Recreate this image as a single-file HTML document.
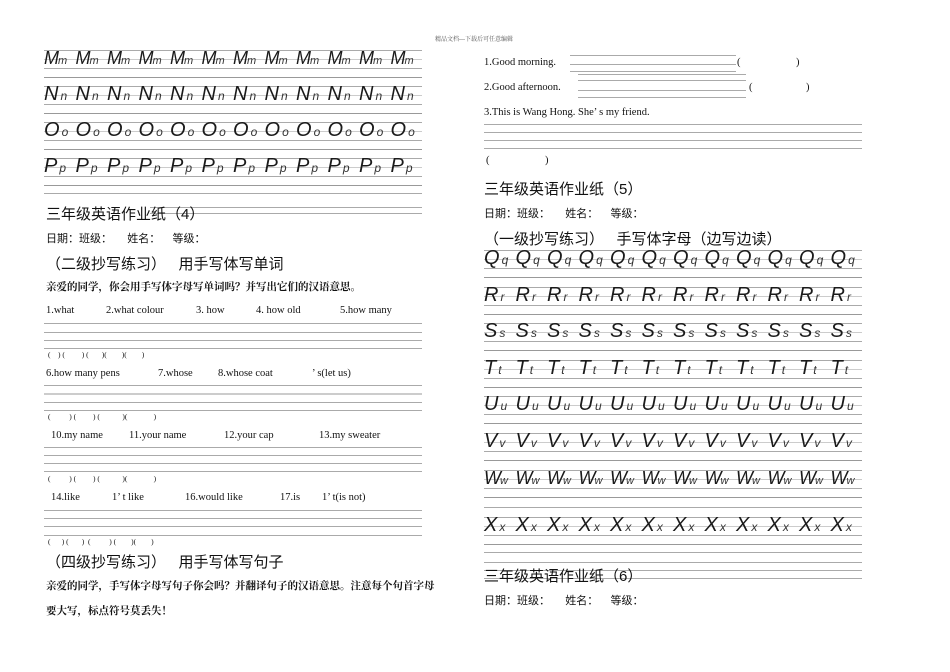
<!DOCTYPE html>
<html><head><meta charset="utf-8">
<style>
body{margin:0;width:950px;height:672px;background:#fff;position:relative;overflow:hidden;font-family:"Liberation Serif","Noto Serif CJK SC",serif;color:#111}
.a{position:absolute;white-space:nowrap}
.lr{position:absolute;width:378px;height:28px;
background:linear-gradient(#aaa,#aaa) 0 0/100% 1px no-repeat,linear-gradient(#ccc,#ccc) 0 9px/100% 1px no-repeat,linear-gradient(#aaa,#aaa) 0 18px/100% 1px no-repeat,linear-gradient(#999,#999) 0 27px/100% 1px no-repeat;
display:flex}
.lr span{width:31.5px;font-family:"Liberation Sans",sans-serif;font-style:italic;font-weight:normal;font-size:20px;line-height:21px;margin-top:-2px;color:#1a1a1a;overflow:visible}
.lr span i{font-size:12px;margin-left:2px;color:#333}
.w span{font-size:18px;letter-spacing:-1px}
.w span i{margin-left:0;font-size:11px}
.h{font-family:"Liberation Sans","Noto Sans CJK SC",sans-serif;font-size:15px}
.s{font-family:"Liberation Sans","Noto Sans CJK SC",sans-serif;font-size:11px}
.b{font-family:"Liberation Serif","Noto Serif CJK SC",serif;font-size:10.5px;font-weight:bold}
.m{font-family:"Liberation Serif","Noto Serif CJK SC",serif;font-size:10.5px}
.p{font-family:"Liberation Serif",serif;font-size:7.5px}
.ln{position:absolute;height:1px;background:#aaa}
</style></head><body>
<div class="a" style="left:435px;top:34px;font-size:6px;color:#555">精品文档---下载后可任意编辑</div>

<div class="lr w" style="left:44px;top:50px"><span>M<i>m</i></span><span>M<i>m</i></span><span>M<i>m</i></span><span>M<i>m</i></span><span>M<i>m</i></span><span>M<i>m</i></span><span>M<i>m</i></span><span>M<i>m</i></span><span>M<i>m</i></span><span>M<i>m</i></span><span>M<i>m</i></span><span>M<i>m</i></span></div>
<div class="lr" style="left:44px;top:86px"><span>N<i>n</i></span><span>N<i>n</i></span><span>N<i>n</i></span><span>N<i>n</i></span><span>N<i>n</i></span><span>N<i>n</i></span><span>N<i>n</i></span><span>N<i>n</i></span><span>N<i>n</i></span><span>N<i>n</i></span><span>N<i>n</i></span><span>N<i>n</i></span></div>
<div class="lr" style="left:44px;top:122px"><span>O<i>o</i></span><span>O<i>o</i></span><span>O<i>o</i></span><span>O<i>o</i></span><span>O<i>o</i></span><span>O<i>o</i></span><span>O<i>o</i></span><span>O<i>o</i></span><span>O<i>o</i></span><span>O<i>o</i></span><span>O<i>o</i></span><span>O<i>o</i></span></div>
<div class="lr" style="left:44px;top:158px"><span>P<i>p</i></span><span>P<i>p</i></span><span>P<i>p</i></span><span>P<i>p</i></span><span>P<i>p</i></span><span>P<i>p</i></span><span>P<i>p</i></span><span>P<i>p</i></span><span>P<i>p</i></span><span>P<i>p</i></span><span>P<i>p</i></span><span>P<i>p</i></span></div>
<div class="ln" style="left:44px;top:193px;width:378px"></div>

<div class="ln" style="left:150px;top:207px;width:272px"></div>
<div class="ln" style="left:150px;top:213px;width:272px"></div>
<div class="a h" style="left:46px;top:203px">三年级英语作业纸（4）</div>
<div class="a s" style="left:46px;top:230px">日期：班级：&nbsp;&nbsp;&nbsp;&nbsp;&nbsp;姓名：&nbsp;&nbsp;&nbsp;&nbsp;等级：</div>
<div class="a h" style="left:46px;top:253px">（二级抄写练习）&nbsp;&nbsp;&nbsp;用手写体写单词</div>
<div class="a b" style="left:46px;top:279px">亲爱的同学，你会用手写体字母写单词吗？并写出它们的汉语意思。</div>

<div class="a m" style="left:46px;top:305px">1.what</div><div class="a m" style="left:106px;top:305px">2.what colour</div><div class="a m" style="left:196px;top:305px">3. how</div><div class="a m" style="left:256px;top:305px">4. how old</div><div class="a m" style="left:340px;top:305px">5.how many</div>
<div class="ln" style="left:44px;top:323px;width:378px"></div><div class="ln" style="left:44px;top:332px;width:378px"></div><div class="ln" style="left:44px;top:340px;width:378px"></div><div class="ln" style="left:44px;top:348px;width:378px"></div>
<div class="a p" style="left:48px;top:350px">(&nbsp;&nbsp;&nbsp;&nbsp;)&nbsp;(&nbsp;&nbsp;&nbsp;&nbsp;&nbsp;&nbsp;&nbsp;&nbsp;&nbsp;)&nbsp;(&nbsp;&nbsp;&nbsp;&nbsp;&nbsp;&nbsp;&nbsp;)(&nbsp;&nbsp;&nbsp;&nbsp;&nbsp;&nbsp;&nbsp;&nbsp;)(&nbsp;&nbsp;&nbsp;&nbsp;&nbsp;&nbsp;&nbsp;&nbsp;)</div>

<div class="a m" style="left:46px;top:368px">6.how many pens</div><div class="a m" style="left:158px;top:368px">7.whose</div><div class="a m" style="left:218px;top:368px">8.whose coat</div><div class="a m" style="left:312px;top:368px">’ s(let us)</div>
<div class="ln" style="left:44px;top:385px;width:378px"></div><div class="ln" style="left:44px;top:393px;width:378px;background:#ccc;height:2px"></div><div class="ln" style="left:44px;top:402px;width:378px"></div><div class="ln" style="left:44px;top:410px;width:378px"></div>
<div class="a p" style="left:48px;top:412px">(&nbsp;&nbsp;&nbsp;&nbsp;&nbsp;&nbsp;&nbsp;&nbsp;&nbsp;&nbsp;)&nbsp;(&nbsp;&nbsp;&nbsp;&nbsp;&nbsp;&nbsp;&nbsp;&nbsp;&nbsp;)&nbsp;(&nbsp;&nbsp;&nbsp;&nbsp;&nbsp;&nbsp;&nbsp;&nbsp;&nbsp;&nbsp;&nbsp;&nbsp;)(&nbsp;&nbsp;&nbsp;&nbsp;&nbsp;&nbsp;&nbsp;&nbsp;&nbsp;&nbsp;&nbsp;&nbsp;&nbsp;&nbsp;)</div>

<div class="a m" style="left:51px;top:430px">10.my name</div><div class="a m" style="left:129px;top:430px">11.your name</div><div class="a m" style="left:224px;top:430px">12.your cap</div><div class="a m" style="left:319px;top:430px">13.my sweater</div>
<div class="ln" style="left:44px;top:447px;width:378px"></div><div class="ln" style="left:44px;top:455px;width:378px"></div><div class="ln" style="left:44px;top:463px;width:378px"></div><div class="ln" style="left:44px;top:471px;width:378px"></div>
<div class="a p" style="left:48px;top:474px">(&nbsp;&nbsp;&nbsp;&nbsp;&nbsp;&nbsp;&nbsp;&nbsp;&nbsp;&nbsp;)&nbsp;(&nbsp;&nbsp;&nbsp;&nbsp;&nbsp;&nbsp;&nbsp;&nbsp;&nbsp;)&nbsp;(&nbsp;&nbsp;&nbsp;&nbsp;&nbsp;&nbsp;&nbsp;&nbsp;&nbsp;&nbsp;&nbsp;&nbsp;)(&nbsp;&nbsp;&nbsp;&nbsp;&nbsp;&nbsp;&nbsp;&nbsp;&nbsp;&nbsp;&nbsp;&nbsp;&nbsp;&nbsp;)</div>

<div class="a m" style="left:51px;top:492px">14.like</div><div class="a m" style="left:112px;top:492px">1’ t like</div><div class="a m" style="left:185px;top:492px">16.would like</div><div class="a m" style="left:280px;top:492px">17.is</div><div class="a m" style="left:322px;top:492px">1’ t(is not)</div>
<div class="ln" style="left:44px;top:510px;width:378px"></div><div class="ln" style="left:44px;top:518px;width:378px"></div><div class="ln" style="left:44px;top:526px;width:378px"></div><div class="ln" style="left:44px;top:535px;width:378px"></div>
<div class="a p" style="left:48px;top:537px">(&nbsp;&nbsp;&nbsp;&nbsp;&nbsp;&nbsp;)&nbsp;(&nbsp;&nbsp;&nbsp;&nbsp;&nbsp;&nbsp;&nbsp;)&nbsp;&nbsp;(&nbsp;&nbsp;&nbsp;&nbsp;&nbsp;&nbsp;&nbsp;&nbsp;&nbsp;&nbsp;)&nbsp;(&nbsp;&nbsp;&nbsp;&nbsp;&nbsp;&nbsp;&nbsp;&nbsp;)(&nbsp;&nbsp;&nbsp;&nbsp;&nbsp;&nbsp;&nbsp;&nbsp;)</div>

<div class="a h" style="left:46px;top:551px">（四级抄写练习）&nbsp;&nbsp;&nbsp;用手写体写句子</div>
<div class="a b" style="left:46px;top:578px">亲爱的同学，手写体字母写句子你会吗？并翻译句子的汉语意思。注意每个句首字母</div>
<div class="a b" style="left:46px;top:603px">要大写，标点符号莫丢失！</div>

<div class="a m" style="left:484px;top:57px">1.Good morning.</div>
<div class="ln" style="left:570px;top:55px;width:166px"></div><div class="ln" style="left:570px;top:64px;width:166px"></div><div class="ln" style="left:570px;top:71px;width:166px"></div><div class="ln" style="left:578px;top:74px;width:168px"></div>
<div class="a m" style="left:737px;top:57px">(</div><div class="a m" style="left:796px;top:57px">)</div>
<div class="a m" style="left:484px;top:82px">2.Good afternoon.</div>
<div class="ln" style="left:578px;top:80px;width:168px"></div><div class="ln" style="left:578px;top:90px;width:168px"></div><div class="ln" style="left:578px;top:97px;width:168px"></div>
<div class="a m" style="left:749px;top:82px">(</div><div class="a m" style="left:806px;top:82px">)</div>
<div class="a m" style="left:484px;top:107px">3.This is Wang Hong. She’ s my friend.</div>
<div class="ln" style="left:484px;top:124px;width:378px"></div><div class="ln" style="left:484px;top:132px;width:378px"></div><div class="ln" style="left:484px;top:140px;width:378px"></div><div class="ln" style="left:484px;top:148px;width:378px"></div>
<div class="a m" style="left:486px;top:155px">(</div><div class="a m" style="left:545px;top:155px">)</div>
<div class="a h" style="left:484px;top:178px">三年级英语作业纸（5）</div>
<div class="a s" style="left:484px;top:205px">日期：班级：&nbsp;&nbsp;&nbsp;&nbsp;&nbsp;姓名：&nbsp;&nbsp;&nbsp;&nbsp;等级：</div>
<div class="a h" style="left:484px;top:228px">（一级抄写练习）&nbsp;&nbsp;&nbsp;手写体字母（边写边读）</div>

<div class="lr" style="left:484px;top:250px"><span>Q<i>q</i></span><span>Q<i>q</i></span><span>Q<i>q</i></span><span>Q<i>q</i></span><span>Q<i>q</i></span><span>Q<i>q</i></span><span>Q<i>q</i></span><span>Q<i>q</i></span><span>Q<i>q</i></span><span>Q<i>q</i></span><span>Q<i>q</i></span><span>Q<i>q</i></span></div>
<div class="lr" style="left:484px;top:287px"><span>R<i>r</i></span><span>R<i>r</i></span><span>R<i>r</i></span><span>R<i>r</i></span><span>R<i>r</i></span><span>R<i>r</i></span><span>R<i>r</i></span><span>R<i>r</i></span><span>R<i>r</i></span><span>R<i>r</i></span><span>R<i>r</i></span><span>R<i>r</i></span></div>
<div class="lr" style="left:484px;top:323px"><span>S<i>s</i></span><span>S<i>s</i></span><span>S<i>s</i></span><span>S<i>s</i></span><span>S<i>s</i></span><span>S<i>s</i></span><span>S<i>s</i></span><span>S<i>s</i></span><span>S<i>s</i></span><span>S<i>s</i></span><span>S<i>s</i></span><span>S<i>s</i></span></div>
<div class="lr" style="left:484px;top:360px"><span>T<i>t</i></span><span>T<i>t</i></span><span>T<i>t</i></span><span>T<i>t</i></span><span>T<i>t</i></span><span>T<i>t</i></span><span>T<i>t</i></span><span>T<i>t</i></span><span>T<i>t</i></span><span>T<i>t</i></span><span>T<i>t</i></span><span>T<i>t</i></span></div>
<div class="lr" style="left:484px;top:396px"><span>U<i>u</i></span><span>U<i>u</i></span><span>U<i>u</i></span><span>U<i>u</i></span><span>U<i>u</i></span><span>U<i>u</i></span><span>U<i>u</i></span><span>U<i>u</i></span><span>U<i>u</i></span><span>U<i>u</i></span><span>U<i>u</i></span><span>U<i>u</i></span></div>
<div class="lr" style="left:484px;top:433px"><span>V<i>v</i></span><span>V<i>v</i></span><span>V<i>v</i></span><span>V<i>v</i></span><span>V<i>v</i></span><span>V<i>v</i></span><span>V<i>v</i></span><span>V<i>v</i></span><span>V<i>v</i></span><span>V<i>v</i></span><span>V<i>v</i></span><span>V<i>v</i></span></div>
<div class="lr w" style="left:484px;top:470px"><span>W<i>w</i></span><span>W<i>w</i></span><span>W<i>w</i></span><span>W<i>w</i></span><span>W<i>w</i></span><span>W<i>w</i></span><span>W<i>w</i></span><span>W<i>w</i></span><span>W<i>w</i></span><span>W<i>w</i></span><span>W<i>w</i></span><span>W<i>w</i></span></div>
<div class="lr" style="left:484px;top:517px"><span>X<i>x</i></span><span>X<i>x</i></span><span>X<i>x</i></span><span>X<i>x</i></span><span>X<i>x</i></span><span>X<i>x</i></span><span>X<i>x</i></span><span>X<i>x</i></span><span>X<i>x</i></span><span>X<i>x</i></span><span>X<i>x</i></span><span>X<i>x</i></span></div>
<div class="ln" style="left:484px;top:507px;width:378px"></div>
<div class="ln" style="left:484px;top:552px;width:378px"></div>
<div class="ln" style="left:484px;top:562px;width:378px"></div>
<div class="ln" style="left:484px;top:570px;width:378px"></div>
<div class="ln" style="left:484px;top:578px;width:378px"></div>
<div class="a h" style="left:484px;top:565px">三年级英语作业纸（6）</div>
<div class="a s" style="left:484px;top:592px">日期：班级：&nbsp;&nbsp;&nbsp;&nbsp;&nbsp;姓名：&nbsp;&nbsp;&nbsp;&nbsp;等级：</div>
</body></html>
